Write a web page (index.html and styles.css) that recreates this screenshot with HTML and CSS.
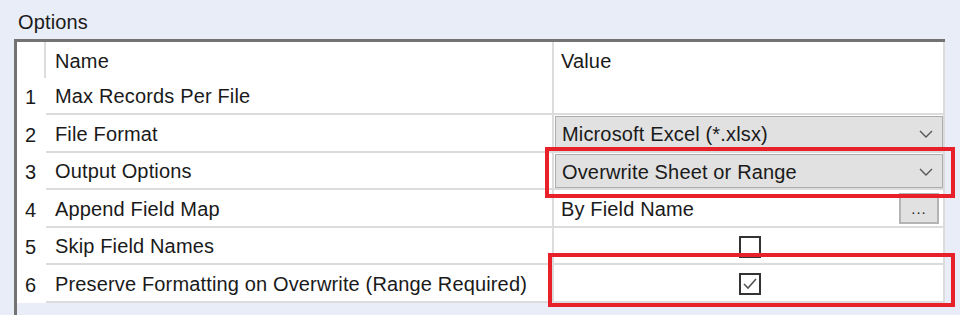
FILE: index.html
```html
<!DOCTYPE html>
<html lang="en">
<head>
  <meta charset="UTF-8">
  <title>Options</title>
  <link rel="stylesheet" href="styles.css">
</head>
<body>
  <div class="caption">Options</div>

  <div class="grid-wrap">
    <div class="grid">
      <!-- header -->
      <div class="cell num head"></div>
      <div class="cell name head">Name</div>
      <div class="cell value head">Value</div>

      <div class="cell num">1</div>
      <div class="cell name">Max Records Per File</div>
      <div class="cell value"></div>

      <div class="cell num">2</div>
      <div class="cell name">File Format</div>
      <div class="cell value">
        <div class="combo">
          <span>Microsoft Excel (*.xlsx)</span>
          <svg class="chevron" width="14" height="8" viewBox="0 0 14 8"><polyline points="1,1 7,7 13,1" fill="none" stroke="#555" stroke-width="1.4"/></svg>
        </div>
      </div>

      <div class="cell num">3</div>
      <div class="cell name">Output Options</div>
      <div class="cell value">
        <div class="combo">
          <span>Overwrite Sheet or Range</span>
          <svg class="chevron" width="14" height="8" viewBox="0 0 14 8"><polyline points="1,1 7,7 13,1" fill="none" stroke="#555" stroke-width="1.4"/></svg>
        </div>
      </div>

      <div class="cell num">4</div>
      <div class="cell name">Append Field Map</div>
      <div class="cell value text-value">
        <span>By Field Name</span>
        <div class="dots">...</div>
      </div>

      <div class="cell num">5</div>
      <div class="cell name">Skip Field Names</div>
      <div class="cell value centered">
        <div class="check"></div>
      </div>

      <div class="cell num">6</div>
      <div class="cell name">Preserve Formatting on Overwrite (Range Required)</div>
      <div class="cell value centered">
        <div class="check">
          <svg width="18" height="18" viewBox="0 0 18 18"><polyline points="3,9 7,13 15,4" fill="none" stroke="#555" stroke-width="1.6"/></svg>
        </div>
      </div>
    </div>

    <!-- annotation boxes -->
    <div class="mark mark-output"></div>
    <div class="mark mark-preserve"></div>
  </div>
</body>
</html>
```

FILE: styles.css
```css
body {
  margin: 0;
  background: #e9edf8;
  color: #1a1a1a;
  font-family: "Liberation Sans", Arial, sans-serif;
  font-size: 20px;
  letter-spacing: 0.15px;
  overflow: hidden;
}

.caption {
  height: 39px;
  padding-left: 18px;
  line-height: 45px;
  box-sizing: border-box;
}

.grid-wrap {
  position: relative;
  margin-left: 14px;
  width: 931px;
  height: calc(100vh - 39px);
  border-top: 3px solid #737373;
  border-left: 3px solid #737373;
  box-sizing: border-box;
}

.grid {
  display: grid;
  grid-template-columns: 29px 508px 1fr;
  grid-template-rows: 35.5px repeat(6, 37.5px);
  background: #fff;
}

.cell {
  display: flex;
  align-items: center;
  box-sizing: border-box;
  white-space: nowrap;
  padding-top: 3px;
}

.num {
  padding-left: 8px;
}

.num.head {
  border-right: 2px solid #dcdcdc;
}

.name {
  padding-left: 9px;
  border-right: 2px solid #dcdcdc;
  border-bottom: 2px solid #dcdcdc;
}

.value {
  padding-left: 7px;
  border-right: 2px solid #dcdcdc;
  border-bottom: 2px solid #dcdcdc;
}

.name.head,
.value.head {
  border-bottom: none;
}

.value:has(.combo) {
  padding: 1px 0 0 1px;
}

.combo {
  flex: 1;
  height: 100%;
  display: flex;
  align-items: center;
  justify-content: space-between;
  padding: 3px 9px 0 6px;
  background: #e1e1e1;
  border: 1px solid #adadad;
  box-sizing: border-box;
}

.chevron {
  margin-top: -1px;
}

.text-value {
  justify-content: space-between;
  padding-right: 4px;
}

.dots {
  width: 40px;
  height: 31px;
  margin-top: -1px;
  background: #e1e1e1;
  border: 2px solid #b4b4b4;
  box-sizing: border-box;
  text-align: center;
  font-size: 15px;
  line-height: 28px;
  letter-spacing: 1px;
}

.centered {
  justify-content: center;
  padding-left: 0;
}

.check {
  width: 22px;
  height: 22px;
  border: 2px solid #333;
  box-sizing: border-box;
  display: flex;
  align-items: center;
  justify-content: center;
  margin-left: 2px;
}

.mark {
  position: absolute;
  border: 4px solid #e8202a;
  box-sizing: border-box;
}

.mark-output {
  left: 528px;
  top: 105px;
  width: 410px;
  height: 51px;
}

.mark-preserve {
  left: 531px;
  top: 211px;
  width: 407px;
  height: 54px;
}
```
